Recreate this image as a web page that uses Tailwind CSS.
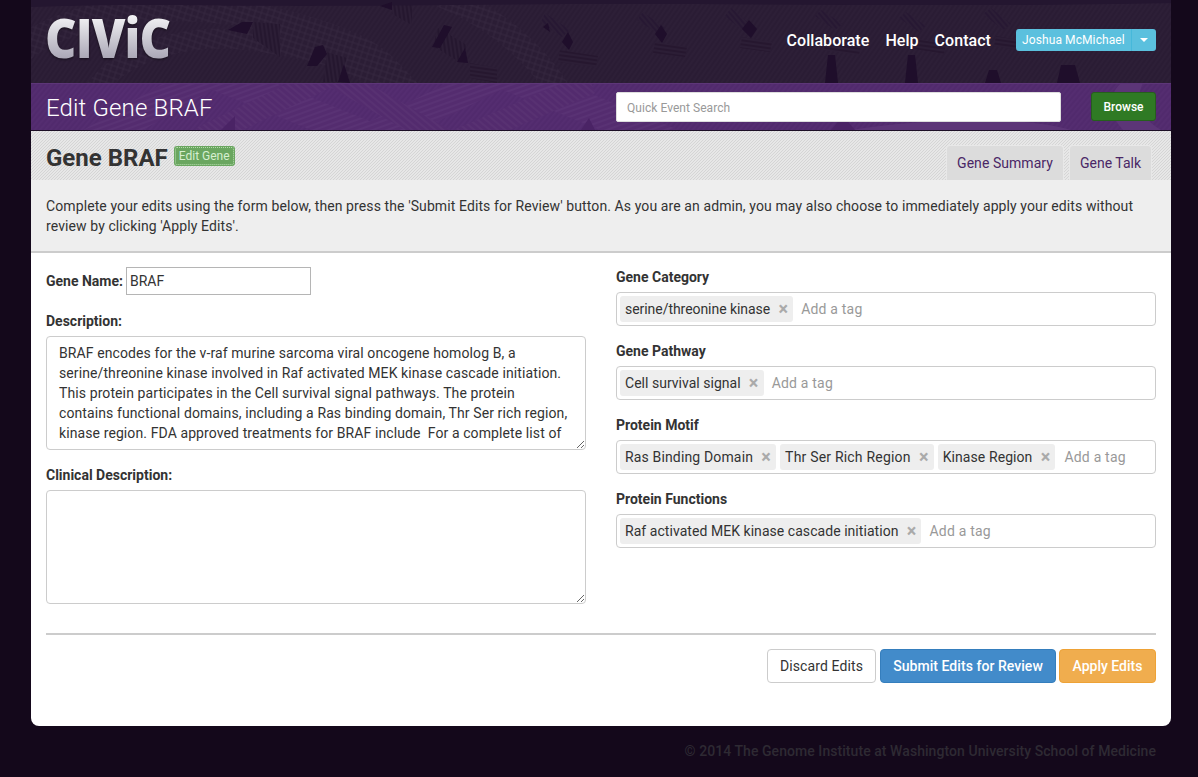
<!DOCTYPE html>
<html lang="en">
<head>
<meta charset="utf-8">
<title>Edit Gene BRAF</title>
<script src="https://cdn.jsdelivr.net/npm/@tailwindcss/browser@4"></script>
</head>
<body class="bg-[#14081b] font-['Roboto',sans-serif] text-[14px] leading-5 text-[#333] h-[777px] overflow-hidden">
<div class="w-[1140px] ml-[31px]">
  <header class="relative h-[83px] bg-[#2a1c34] overflow-hidden flex items-center justify-between pl-[15px] pr-[15px]">
    <svg class="absolute inset-0" width="1140" height="83" aria-hidden="true">
      <defs>
        <pattern id="h0" width="4" height="4" patternUnits="userSpaceOnUse" patternTransform="rotate(-55)"><path d="M0 1H4" stroke="#2f2139" stroke-width="1"/></pattern>
        <pattern id="h1" width="6" height="6" patternUnits="userSpaceOnUse" patternTransform="rotate(18)"><rect width="6" height="6" fill="#2b1d35"/><path d="M0 1H6M1 0V6" stroke="#35273f" stroke-width="1"/></pattern>
        <pattern id="h2" width="4" height="4" patternUnits="userSpaceOnUse" patternTransform="rotate(82)"><rect width="4" height="4" fill="#2c1e36"/><path d="M0 1H4" stroke="#201129" stroke-width="1.2"/></pattern>
        <pattern id="h3" width="4" height="4" patternUnits="userSpaceOnUse" patternTransform="rotate(8)"><rect width="4" height="4" fill="#2c1e36"/><path d="M0 1H4" stroke="#201129" stroke-width="1.1"/></pattern>
        <pattern id="h4" width="4" height="4" patternUnits="userSpaceOnUse" patternTransform="rotate(50)"><rect width="4" height="4" fill="#2c1e36"/><path d="M0 1H4" stroke="#221330" stroke-width="1.1"/></pattern>
      </defs>
      <rect width="1140" height="83" fill="url(#h0)"/>
      <path d="M-10 50C40 10 150 -5 250 22S345 60 380 95" fill="none" stroke="url(#h1)" stroke-width="26"/>
      <path d="M60 95C90 50 160 30 230 42S330 60 360 95" fill="none" stroke="url(#h1)" stroke-width="20"/>
      <path d="M410 -5C470 20 510 60 530 95" fill="none" stroke="url(#h1)" stroke-width="24"/>
      <path d="M222 22L249 24 249 57 222 38Z M361 2L381 2 381 25 361 14Z M296 52L316 58 307 82 292 82Z M407 28L436 45 430 63 402 46Z" fill="url(#h2)"/>
      <path d="M439 63L466 68 466 83 439 78ZM529 50L567 56 565 67 527 62ZM624 42L656 47 654 57 622 53ZM711 37L741 42 739 52 709 48ZM795 40L830 45 828 55 793 50ZM880 38L915 44 913 54 878 48ZM965 36L1000 42 998 52 963 46ZM1050 34L1090 40 1088 50 1048 44Z" fill="url(#h3)"/>
      <path d="M514 13L539 30 531 37 510 22ZM612 12L634 28 626 33 606 20ZM700 8L719 24 711 30 694 16ZM790 10L812 24 804 30 784 16ZM875 12L895 26 888 32 868 18ZM960 8L980 24 972 30 952 14Z" fill="url(#h4)"/>
      <path d="M0 0H1140V3C900 8 700 2 420 5S140 2 0 7Z" fill="#241630"/>
      <path d="M197 30l14-8 11 0-6 12zM276 66l8-19 8-2 4 9-10 12zM307 82l6-18 6 19zM349 6l12-4 0 8zM401 47l12-22 8 2-12 21zM426 62l8-14 3 15zM531 42l6-10 5 10-4 8zM512 27l5-4 2 9zM624 34l6-9 6 9-5 9zM711 29l7-9 8 9-6 9zM794 83l3-28 7 0 3 28zM874 83l3-28 7 0 3 28zM954 83l4-13 8 0 4 13zM1026 83l4-18 14 0 5 18z" fill="#1f0e2b"/>
    </svg>
    <a class="relative -ml-[1px] font-['Open_Sans',sans-serif] font-extrabold text-[54px] leading-[56px] -mt-[9px] tracking-[-1px] origin-left scale-x-[0.9] text-transparent bg-clip-text bg-gradient-to-b from-white to-[#a09cad] drop-shadow-[0_1px_1px_rgba(0,0,0,0.5)]">CIViC</a>
    <div class="relative flex items-center -mt-[3px]">
      <nav class="flex items-center gap-[16px] pt-[1px] text-[16px] font-medium text-white tracking-[0.05px]">
        <a>Collaborate</a><a>Help</a><a>Contact</a>
      </nav>
      <div class="ml-[25px] flex h-[22px] w-[140px] items-center rounded-[3px] bg-[#5bc0de] text-[12px] text-white">
        <span class="flex-1 pl-[6px] tracking-[0.1px]">Joshua McMichael</span>
        <span class="flex h-full w-[25px] items-center justify-center border-l border-[#46b8da]">
          <span class="h-0 w-0 border-x-[4px] border-t-[4px] border-x-transparent border-t-white"></span>
        </span>
      </div>
    </div>
  </header>

  <section class="relative h-[48px] bg-[#512a6d] border-b border-[#1d0f26] overflow-hidden flex items-start pt-[9px] pl-[15px] pr-[15px]">
    <svg class="absolute inset-0" width="1140" height="47" aria-hidden="true">
      <defs>
        <pattern id="p0" width="4" height="4" patternUnits="userSpaceOnUse" patternTransform="rotate(-50)"><path d="M0 1H4" stroke="#572f73" stroke-width="1"/></pattern>
        <pattern id="p1" width="5" height="5" patternUnits="userSpaceOnUse" patternTransform="rotate(-20)"><rect width="5" height="5" fill="#542c6f"/><path d="M0 1H5" stroke="#5e3878" stroke-width="1"/></pattern>
        <pattern id="p2" width="5" height="5" patternUnits="userSpaceOnUse" patternTransform="rotate(40)"><rect width="5" height="5" fill="#532b6e"/><path d="M0 1H5" stroke="#5c3676" stroke-width="1"/></pattern>
      </defs>
      <rect width="1140" height="47" fill="url(#p0)"/>
      <path d="M60 60L180 -10 340 55 470 -10 640 60" fill="none" stroke="url(#p1)" stroke-width="30"/>
      <path d="M170 55L300 -8 420 60 560 0" fill="none" stroke="url(#p2)" stroke-width="22"/>
      <path d="M0 0.5H1140" stroke="#5d3678" stroke-width="1"/>
      <path d="M1090 0C1075 14 1078 32 1092 47H1130C1108 34 1104 16 1112 0Z M1040 47C1000 34 900 34 820 47Z" fill="#5c3577"/>
      <path d="M190 47l14-14v14zM550 47l8-12 6 12zM800 47l12-14 12 14z" fill="#4a2365"/>
    </svg>
    <h1 class="relative mt-[1px] w-[570px] text-[24px] font-light leading-[30px] text-white tracking-[0.15px]">Edit Gene BRAF</h1>
    <div class="relative flex items-start">
      <div class="flex h-[30px] w-[445px] items-center rounded-[2px] border border-[#ddd] bg-white pl-[10px] pt-[1px] text-[12px] text-[#999] tracking-[0.05px]">Quick Event Search</div>
      <button class="ml-[30px] h-[29px] w-[65px] rounded-[3px] border border-[#255f1c] bg-[#2f7a24] pt-[1px] text-[12px] font-medium text-white">Browse</button>
    </div>
  </section>

  <section class="relative flex h-[49px] justify-between overflow-hidden pl-[15px] pr-[19px] bg-[#e0e0e0]">
    <svg class="absolute inset-0" width="1140" height="49" aria-hidden="true">
      <defs>
        <pattern id="g1" width="3" height="3" patternUnits="userSpaceOnUse"><rect width="3" height="3" fill="#e7e7e7"/><path d="M-1 1L1 -1M-1 4L4 -1M2 4L4 2" stroke="#d3d3d3" stroke-width="0.9"/></pattern>
      </defs>
      <rect width="1140" height="49" fill="url(#g1)"/>
    </svg>
    <div class="relative flex items-start pt-[13px]">
      <h2 class="text-[24px] font-bold leading-[28px] text-[#333]">Gene BRAF</h2>
      <span class="ml-[6px] mt-[2px] flex h-[20px] w-[61px] items-center justify-center rounded-[3px] bg-[#6aa660] text-[12px] text-[#d6efd0] outline-1 -outline-offset-2 outline-dotted outline-[#b4dcab]">Edit Gene</span>
    </div>
    <div class="relative flex items-end gap-[5px]">
      <a class="flex h-[35px] w-[118px] items-center justify-center rounded-t-[4px] border border-b-0 border-[#e8e8e8] bg-[#dcdcdc] pb-[1px] text-[#4a2766] tracking-[0.05px]">Gene Summary</a>
      <a class="flex h-[35px] w-[83px] items-center justify-center rounded-t-[4px] border border-b-0 border-[#e8e8e8] bg-[#dcdcdc] pb-[1px] text-[#4a2766]">Gene Talk</a>
    </div>
  </section>

  <section class="h-[73px] bg-[#eeeeee] border-b-2 border-[#cccccc] px-[15px] pt-[16px]">
    <p class="tracking-[0.1px]">Complete your edits using the form below, then press the 'Submit Edits for Review' button. As you are an admin, you may also choose to immediately apply your edits without review by clicking 'Apply Edits'.</p>
  </section>

  <main class="h-[473px] rounded-b-[8px] bg-white px-[15px] pt-[14px]">
    <div class="grid grid-cols-2 gap-x-[30px]">
      <div>
        <div class="flex items-center h-[28px]">
          <label class="font-bold w-[80px]">Gene Name:</label>
          <div class="flex h-[28px] w-[185px] items-center border border-[#b5b5b5] px-[3px]">BRAF</div>
        </div>
        <label class="mt-[16px] block font-bold">Description:</label>
        <textarea rows="5" class="mt-[5px] block h-[114px] w-[540px] overflow-hidden rounded-[4px] border border-[#ccc] px-[12px] py-[6px] text-[#333] tracking-[0.1px]">BRAF encodes for the v-raf murine sarcoma viral oncogene homolog B, a
serine/threonine kinase involved in Raf activated MEK kinase cascade initiation.
This protein participates in the Cell survival signal pathways. The protein
contains functional domains, including a Ras binding domain, Thr Ser rich region,
kinase region. FDA approved treatments for BRAF include  For a complete list of</textarea>
        <label class="mt-[15px] block font-bold">Clinical Description:</label>
        <textarea rows="5" class="mt-[5px] block h-[114px] w-[540px] overflow-hidden rounded-[4px] border border-[#ccc] px-[12px] py-[6px]"></textarea>
      </div>
      <div>
        <label class="block font-bold">Gene Category</label>
        <div class="mt-[5px] flex h-[34px] items-center gap-[4px] rounded-[4px] border border-[#ccc] pl-[3px]">
          <span class="flex h-[26px] items-center rounded-[3px] bg-[#eeeeee] pl-[5px] pr-[5px]"><span class="tracking-[-0.05px]">serine/threonine kinase</span><span class="ml-[8px] w-[10px] text-center text-[18px] leading-none font-bold text-[#aaa]">×</span></span>
          <span class="ml-[4px] text-[#999] tracking-[0.2px]">Add a tag</span>
        </div>
        <label class="mt-[15px] block font-bold">Gene Pathway</label>
        <div class="mt-[5px] flex h-[34px] items-center gap-[4px] rounded-[4px] border border-[#ccc] pl-[3px]">
          <span class="flex h-[26px] items-center rounded-[3px] bg-[#eeeeee] pl-[5px] pr-[5px]"><span class="tracking-[0.02px]">Cell survival signal</span><span class="ml-[8px] w-[10px] text-center text-[18px] leading-none font-bold text-[#aaa]">×</span></span>
          <span class="ml-[4px] text-[#999] tracking-[0.2px]">Add a tag</span>
        </div>
        <label class="mt-[15px] block font-bold">Protein Motif</label>
        <div class="mt-[5px] flex h-[34px] items-center gap-[4px] rounded-[4px] border border-[#ccc] pl-[3px]">
          <span class="flex h-[26px] items-center rounded-[3px] bg-[#eeeeee] pl-[5px] pr-[5px]"><span class="tracking-[0.15px]">Ras Binding Domain</span><span class="ml-[8px] w-[10px] text-center text-[18px] leading-none font-bold text-[#aaa]">×</span></span>
          <span class="flex h-[26px] items-center rounded-[3px] bg-[#eeeeee] pl-[5px] pr-[5px]"><span class="tracking-[0.2px]">Thr Ser Rich Region</span><span class="ml-[8px] w-[10px] text-center text-[18px] leading-none font-bold text-[#aaa]">×</span></span>
          <span class="flex h-[26px] items-center rounded-[3px] bg-[#eeeeee] pl-[5px] pr-[5px]"><span class="tracking-[0.08px]">Kinase Region</span><span class="ml-[8px] w-[10px] text-center text-[18px] leading-none font-bold text-[#aaa]">×</span></span>
          <span class="ml-[5px] text-[#999] tracking-[0.2px]">Add a tag</span>
        </div>
        <label class="mt-[15px] block font-bold">Protein Functions</label>
        <div class="mt-[5px] flex h-[34px] items-center gap-[4px] rounded-[4px] border border-[#ccc] pl-[3px]">
          <span class="flex h-[26px] items-center rounded-[3px] bg-[#eeeeee] pl-[5px] pr-[5px]"><span class="tracking-[0.05px]">Raf activated MEK kinase cascade initiation</span><span class="ml-[8px] w-[10px] text-center text-[18px] leading-none font-bold text-[#aaa]">×</span></span>
          <span class="ml-[4px] text-[#999] tracking-[0.2px]">Add a tag</span>
        </div>
      </div>
    </div>
    <div class="mt-[29px] border-t-2 border-[#cccccc] pt-[14px] flex justify-end gap-[4px]">
      <button class="h-[34px] w-[109px] rounded-[4px] border border-[#ccc] bg-white text-[#333] tracking-[0.1px]">Discard Edits</button>
      <button class="h-[34px] w-[176px] rounded-[4px] border border-[#357ebd] bg-[#428bca] font-medium text-white tracking-[0.05px]">Submit Edits for Review</button>
      <button class="-ml-[1px] h-[34px] w-[97px] rounded-[4px] border border-[#eea236] bg-[#f0ad4e] font-medium text-white">Apply Edits</button>
    </div>
  </main>

  <footer class="px-[15px] pt-[15px] text-right font-medium text-[#2e2a33] tracking-[0.06px]">© 2014 The Genome Institute at Washington University School of Medicine</footer>
</div>
</body>
</html>
